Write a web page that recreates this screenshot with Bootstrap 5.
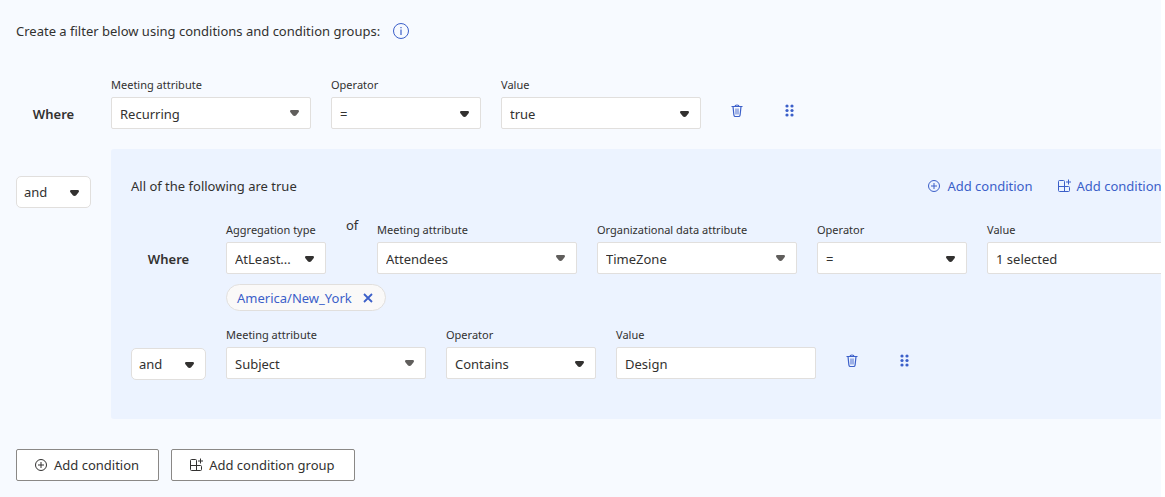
<!DOCTYPE html>
<html lang="en">
<head>
<meta charset="utf-8">
<meta name="viewport" content="width=device-width, initial-scale=1">
<title>Filter conditions</title>
<link href="https://cdn.jsdelivr.net/npm/bootstrap@5.3.0/dist/css/bootstrap.min.css" rel="stylesheet">
<style>
  :root { --ink: #323130; --accent: #3b5fc9; --line: #e1dfdd; }
  body { font-family: "Segoe UI", "Noto Sans", sans-serif; font-size: 13px; line-height: 20px; color: var(--ink); background: #fff; }
  .builder { background: #f7faff; min-height: 100vh; padding: 20px 0 16px 16px; }
  .intro { line-height: 22px; }
  .intro-row { gap: 12px; }
  .lead-cell { flex: 0 0 75px; }
  .where-text { height: 32px; line-height: 34px; font-weight: 600; text-align: center; }
  .cond-row { column-gap: 20px; }
  .first-row { margin-top: 35px; }
  .group-row { margin-top: 20px; }
  .field-label { display: block; font-size: 11px; line-height: 16px; margin-bottom: 4px; white-space: nowrap; }
  .form-select, .form-control { height: 32px; padding: 2px 8px 0; font-size: 13px; line-height: 20px; color: var(--ink); background-color: #fff; border-color: var(--line); border-radius: 2px; }
  .form-select { padding-right: 28px; background-position: right 10px top 12px; background-size: 11px 8px;
    background-image: url("data:image/svg+xml,%3Csvg xmlns='http://www.w3.org/2000/svg' viewBox='0 0 11 8'%3E%3Cpath d='M2.200 1h6.600q1.200 0 1.200 1.200-.1.800-.8 1.600L7.200 6.300q-.6.700-1.700.7t-1.700-.7L1.800 3.800Q1.100 3 1 2.200 1 1 2.200 1z' fill='%23323130'/%3E%3C/svg%3E"); }
  .form-select.attr { background-position: right 10px top 11px;
    background-image: url("data:image/svg+xml,%3Csvg xmlns='http://www.w3.org/2000/svg' viewBox='0 0 11 8'%3E%3Cpath d='M2.200 1h6.600q1.200 0 1.200 1.200-.1.800-.8 1.600L7.200 6.300q-.6.700-1.700.7t-1.700-.7L1.800 3.800Q1.100 3 1 2.200 1 1 2.200 1z' fill='%23605e5c'/%3E%3C/svg%3E"); }
  .form-select.join { border-radius: 5px; padding-left: 7px; padding-top: 0; }
  .w-attr { flex: 0 0 200px; }
  .w-op { flex: 0 0 150px; }
  .w-agg { flex: 0 0 100px; }
  .group-panel { background: #ecf3ff; border-radius: 3px 0 0 3px; padding: 27px 20px 39px; overflow: hidden; }
  .group-wide { min-width: 1071px; }
  .group-join { padding-top: 27px; }
  .group-actions { gap: 24px; }
  .inner-row { margin-top: 26px; }
  .of-word { width: 11px; margin-top: -7px; }
  .last-row { margin-top: 16px; }
  .inner-join { padding-top: 21px; }
  .link-btn, .icon-btn { border: 0; background: none; padding: 0; color: var(--accent); }
  .link-btn { line-height: 20px; white-space: nowrap; }
  .icon-btn { width: 32px; height: 32px; }
  .row-tools { gap: 20px; margin-top: 17px; }
  .pill { height: 27px; border: 1px solid var(--line); border-radius: 14px; background: #faf9f8; color: var(--accent); padding: 0 12px 0 10px; margin: 10px 0 0 95px; gap: 11px; }
  .foot { gap: 12px; margin-top: 30px; }
  .foot-btn { height: 32px; border: 1px solid #8a8886; border-radius: 2px; background: #fff; color: var(--ink); padding: 0 19px 0 17px; line-height: 32px; white-space: nowrap; }
  .group-actions button, .foot-btn { gap: 6px; }
  svg { display: block; flex: none; }
</style>
</head>
<body>
<svg width="0" height="0" class="position-absolute" aria-hidden="true">
  <defs>
    <symbol id="i-plus" viewBox="0 0 14 14"><circle cx="7" cy="7" r="5.500" fill="none" stroke="currentColor"/><path d="M7 4v6M4 7h6" stroke="currentColor"/></symbol>
    <symbol id="i-group" viewBox="0 0 14 14"><path d="M7.500 12.500V2.500a1 1 0 0 0-1-1h-4a1 1 0 0 0-1 1v9a1 1 0 0 0 1 1h9a1 1 0 0 0 1-1V8.500a1 1 0 0 0-1-1h-10M11.500.5v5M9 3h5" fill="none" stroke="currentColor"/></symbol>
    <symbol id="i-trash" viewBox="0 0 12 13"><path d="M.5 2.500h11M4 2.500C4 .5 8 .5 8 2.500M2 2.500l.9 8.500q.1 1.500 1.500 1.500h3.200q1.400 0 1.500-1.500L10 2.500" fill="none" stroke="currentColor" stroke-width="1.200"/><path d="M4 4.500h4v6H4z" fill="currentColor" opacity=".45"/></symbol>
    <symbol id="i-grip" viewBox="0 0 9 13"><g fill="currentColor"><circle cx="2" cy="2" r="1.600"/><circle cx="7" cy="2" r="1.600"/><circle cx="2" cy="6.500" r="1.600"/><circle cx="7" cy="6.500" r="1.600"/><circle cx="2" cy="11" r="1.600"/><circle cx="7" cy="11" r="1.600"/></g></symbol>
  </defs>
</svg>
<main class="builder me-1 overflow-hidden">
  <div class="intro-row d-flex align-items-center">
    <span class="intro">Create a filter below using conditions and condition groups:</span>
    <button type="button" class="link-btn" aria-label="Information">
      <svg width="18" height="18" viewBox="0 0 18 18"><circle cx="9" cy="9" r="7.500" fill="none" stroke="currentColor"/><path d="M9 7.500V13M9 5v1.300" stroke="currentColor" stroke-width="1.200"/></svg>
    </button>
  </div>

  <div class="cond-row first-row d-flex">
    <div class="lead-cell where-text align-self-end">Where</div>
    <div class="w-attr"><label class="field-label" for="a1">Meeting attribute</label><select id="a1" class="form-select attr"><option>Recurring</option></select></div>
    <div class="w-op"><label class="field-label" for="o1">Operator</label><select id="o1" class="form-select"><option>=</option></select></div>
    <div class="w-attr"><label class="field-label" for="v1">Value</label><select id="v1" class="form-select"><option>true</option></select></div>
    <div class="row-tools d-flex">
      <button type="button" class="icon-btn d-flex align-items-center justify-content-center" aria-label="Delete condition"><svg width="12" height="13"><use href="#i-trash"/></svg></button>
      <button type="button" class="icon-btn d-flex align-items-center justify-content-center" aria-label="Move condition"><svg width="9" height="13"><use href="#i-grip"/></svg></button>
    </div>
  </div>

  <div class="cond-row group-row d-flex">
    <div class="lead-cell group-join"><select class="form-select join" aria-label="Join group"><option>and</option></select></div>
    <section class="group-panel flex-grow-1">
      <div class="group-wide">
        <div class="d-flex justify-content-between">
          <span>All of the following are true</span>
          <div class="d-flex group-actions">
            <button type="button" class="link-btn d-flex align-items-center"><svg width="14" height="14"><use href="#i-plus"/></svg>Add condition</button>
            <button type="button" class="link-btn d-flex align-items-center"><svg width="14" height="14"><use href="#i-group"/></svg>Add condition group</button>
          </div>
        </div>
        <div class="cond-row inner-row d-flex">
          <div class="lead-cell where-text align-self-end">Where</div>
          <div class="w-agg"><label class="field-label" for="g2">Aggregation type</label><select id="g2" class="form-select"><option>AtLeast...</option></select></div>
          <span class="of-word">of</span>
          <div class="w-attr"><label class="field-label" for="a2">Meeting attribute</label><select id="a2" class="form-select attr"><option>Attendees</option></select></div>
          <div class="w-attr"><label class="field-label" for="d2">Organizational data attribute</label><select id="d2" class="form-select attr"><option>TimeZone</option></select></div>
          <div class="w-op"><label class="field-label" for="o2">Operator</label><select id="o2" class="form-select"><option>=</option></select></div>
          <div class="w-attr"><label class="field-label" for="v2">Value</label><select id="v2" class="form-select"><option>1 selected</option></select></div>
        </div>
        <button type="button" class="pill d-flex align-items-center">America/New_York<svg width="10" height="10" viewBox="0 0 10 10"><path d="M1 1l8 8M9 1L1 9" stroke="currentColor" stroke-width="1.800"/></svg></button>
        <div class="cond-row last-row d-flex">
          <div class="lead-cell inner-join"><select class="form-select join" aria-label="Join condition"><option>and</option></select></div>
          <div class="w-attr"><label class="field-label" for="a3">Meeting attribute</label><select id="a3" class="form-select attr"><option>Subject</option></select></div>
          <div class="w-op"><label class="field-label" for="o3">Operator</label><select id="o3" class="form-select"><option>Contains</option></select></div>
          <div class="w-attr"><label class="field-label" for="v3">Value</label><input id="v3" type="text" class="form-control" value="Design"></div>
          <div class="row-tools d-flex">
            <button type="button" class="icon-btn d-flex align-items-center justify-content-center" aria-label="Delete condition"><svg width="12" height="13"><use href="#i-trash"/></svg></button>
            <button type="button" class="icon-btn d-flex align-items-center justify-content-center" aria-label="Move condition"><svg width="9" height="13"><use href="#i-grip"/></svg></button>
          </div>
        </div>
      </div>
    </section>
  </div>

  <div class="foot d-flex">
    <button type="button" class="foot-btn d-flex align-items-center"><svg width="14" height="14"><use href="#i-plus"/></svg>Add condition</button>
    <button type="button" class="foot-btn d-flex align-items-center"><svg width="14" height="14"><use href="#i-group"/></svg>Add condition group</button>
  </div>
</main>
<script src="https://cdn.jsdelivr.net/npm/bootstrap@5.3.0/dist/js/bootstrap.bundle.min.js"></script>
</body>
</html>
